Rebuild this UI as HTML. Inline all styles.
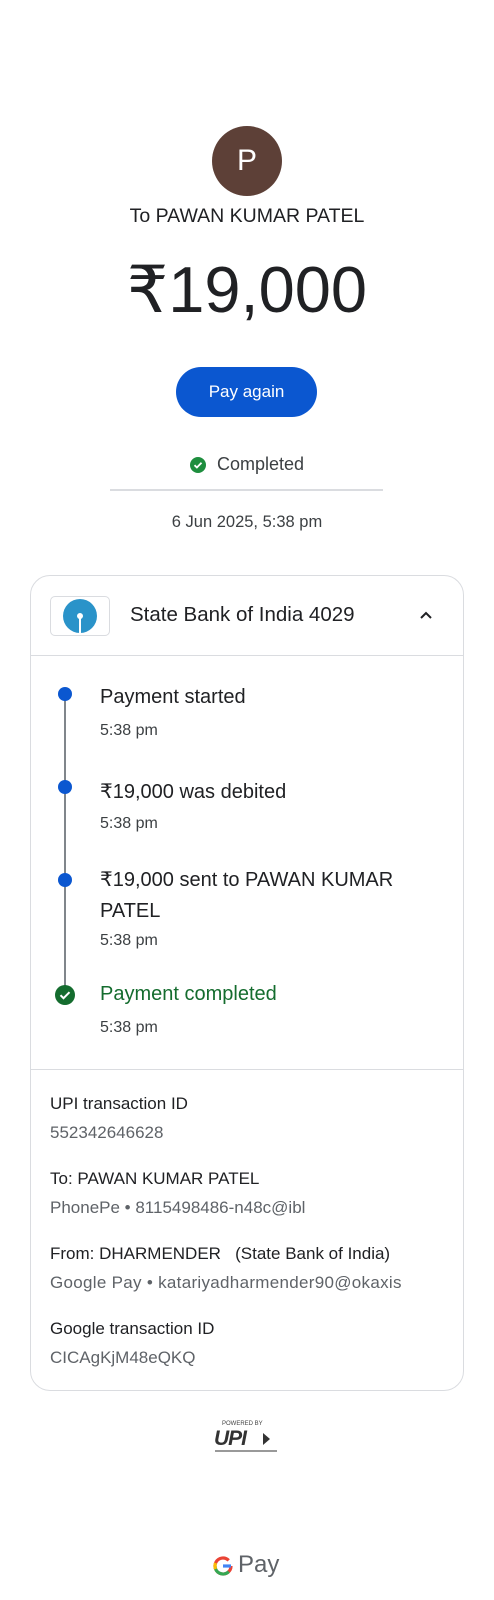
<!DOCTYPE html>
<html><head><meta charset="utf-8"><style>
*{margin:0;padding:0;box-sizing:border-box}
body{width:494px;height:1600px;background:#fff;font-family:"Liberation Sans",sans-serif;color:#202124;position:relative;overflow:hidden}
.a{position:absolute}
.c{left:0;right:0;text-align:center}
.tl{position:absolute;left:100px;font-size:20px;color:#202124}
.tm{position:absolute;left:100px;font-size:16px;color:#3c4043}
.dot{position:absolute;left:58px;width:14px;height:14px;border-radius:50%;background:#0b57d0}
.lbl{position:absolute;left:50px;font-size:17px;color:#202124}
.val{position:absolute;left:50px;font-size:17px;color:#5f6368}
</style></head><body>
<div class="a" style="left:212px;top:126px;width:70px;height:70px;border-radius:50%;background:#5d4037;color:#fff;font-size:30px;text-align:center;line-height:70px">P</div>
<div class="a c" style="top:205px;font-size:19.5px">To PAWAN KUMAR PATEL</div>
<div class="a c" style="top:252px;font-size:65px;line-height:76px">₹19,000</div>
<div class="a" style="left:176px;top:367px;width:141px;height:50px;border-radius:25px;background:#0b57d0;color:#fff;font-size:17px;text-align:center;line-height:50px">Pay again</div>
<div class="a" style="left:190px;top:457px;width:16px;height:16px;border-radius:50%;background:#1e8e3e"><svg width="16" height="16"><path d="M4.5 8.2l2.4 2.3 4.6-4.8" stroke="#fff" stroke-width="1.8" fill="none"/></svg></div>
<div class="a" style="left:217px;top:454px;font-size:18px;color:#3c4043">Completed</div>
<div class="a" style="left:110px;top:489px;width:273px;height:2px;background:#dadce0"></div>
<div class="a c" style="top:513px;font-size:16.5px;color:#3c4043">6 Jun 2025, 5:38 pm</div>
<div class="a" style="left:30px;top:575px;width:434px;height:816px;border:1px solid #dadce0;border-radius:20px"></div>
<div class="a" style="left:50px;top:596px;width:60px;height:40px;border:1px solid #dadce0;border-radius:5px"></div>
<div class="a" style="left:63px;top:599px;width:34px;height:34px;border-radius:50%;background:#2a93c9"></div>
<div class="a" style="left:77px;top:613px;width:6px;height:6px;border-radius:50%;background:#fff"></div>
<div class="a" style="left:79px;top:616px;width:2px;height:18px;background:#fff"></div>
<div class="a" style="left:130px;top:603px;font-size:20.5px">State Bank of India 4029</div>
<svg class="a" style="left:419px;top:610px" width="14" height="10"><path d="M2 8l5-5 5 5" stroke="#202124" stroke-width="2" fill="none"/></svg>
<div class="a" style="left:31px;top:655px;width:432px;height:1px;background:#dadce0"></div>
<div class="a" style="left:64px;top:698px;width:2px;height:296px;background:#80868b"></div>
<div class="dot" style="top:687px"></div>
<div class="tl" style="top:686px">Payment started</div>
<div class="tm" style="top:722px">5:38 pm</div>
<div class="dot" style="top:780px"></div>
<div class="tl" style="top:779px">₹19,000 was debited</div>
<div class="tm" style="top:815px">5:38 pm</div>
<div class="dot" style="top:873px"></div>
<div class="tl" style="top:865px;line-height:31px">₹19,000 sent to PAWAN KUMAR<br>PATEL</div>
<div class="tm" style="top:932px">5:38 pm</div>
<div class="a" style="left:55px;top:985px;width:20px;height:20px;border-radius:50%;background:#146c2e"><svg width="20" height="20"><path d="M5.5 10.2l3 3 6-6" stroke="#fff" stroke-width="2" fill="none"/></svg></div>
<div class="tl" style="top:983px;color:#146c2e">Payment completed</div>
<div class="tm" style="top:1019px">5:38 pm</div>
<div class="a" style="left:31px;top:1069px;width:432px;height:1px;background:#dadce0"></div>
<div class="lbl" style="top:1094px">UPI transaction ID</div>
<div class="val" style="top:1123px">552342646628</div>
<div class="lbl" style="top:1169px">To: PAWAN KUMAR PATEL</div>
<div class="val" style="top:1198px">PhonePe • 8115498486-n48c@ibl</div>
<div class="lbl" style="top:1244px;white-space:pre">From: DHARMENDER   (State Bank of India)</div>
<div class="val" style="top:1273px;letter-spacing:0.3px">Google Pay • katariyadharmender90@okaxis</div>
<div class="lbl" style="top:1319px">Google transaction ID</div>
<div class="val" style="top:1348px">CICAgKjM48eQKQ</div>
<div class="a" style="left:222px;top:1421px;font-size:6px;color:#444">POWERED BY</div>
<div class="a" style="left:214px;top:1427px;font-size:21px;font-style:italic;font-weight:bold;color:#333;letter-spacing:-1px">UPI</div>
<div class="a" style="left:263px;top:1433px;width:0;height:0;border-left:7px solid #333;border-top:6px solid transparent;border-bottom:6px solid transparent"></div>
<div class="a" style="left:215px;top:1450px;width:62px;height:2px;background:#999"></div>
<svg class="a" style="left:211px;top:1554px" width="24" height="24" viewBox="0 0 24 24"><path d="M20 12a8 8 0 1 1-2.3-5.6" stroke="#ea4335" stroke-width="3.2" fill="none"/><path d="M4 12a8 8 0 0 0 13.7 5.6" stroke="#34a853" stroke-width="3.2" fill="none"/><path d="M4.6 9a8 8 0 0 0 0 6" stroke="#fbbc04" stroke-width="3.2" fill="none"/><path d="M12 12h8" stroke="#4285f4" stroke-width="3.2"/></svg>
<div class="a" style="left:238px;top:1551px;font-size:24px;color:#5f6368">Pay</div>
</body></html>
